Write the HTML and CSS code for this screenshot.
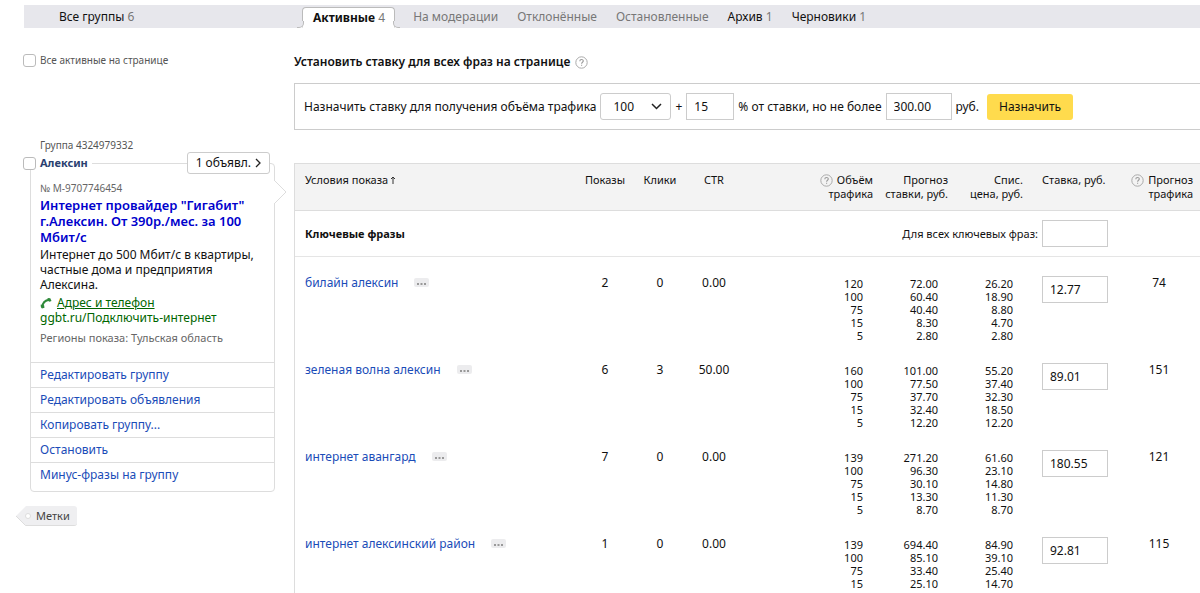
FILE: index.html
```html
<!DOCTYPE html>
<html lang="ru">
<head>
<meta charset="utf-8">
<title>Группы объявлений</title>
<link rel="stylesheet" href="styles.css">
</head>
<body>
<svg class="defs" width="0" height="0" aria-hidden="true">
  <symbol id="help" viewBox="0 0 13 13"><circle cx="6.5" cy="6.5" r="5.7" fill="none" stroke="#aaa" stroke-width="1"/><path d="M4.800 5.200c0-2.200 3.500-2.200 3.500-.2 0 1.200-1.700 1.300-1.700 2.700M6.600 8.700v1.100" fill="none" stroke="#999" stroke-width="1.100"/></symbol>
  <symbol id="dots" viewBox="0 0 15 9"><path d="M3 5h2v2H3zM6.500 5h2v2h-2zM10 5h2v2h-2z" fill="#999"/></symbol>
</svg>
<nav class="tabs">
  <a class="tab tab-all" href="#">Все группы <span class="count">6</span></a>
  <div class="tab-list">
    <a class="tab tab-active" href="#"><b>Активные</b> <span class="count">4</span></a>
    <a class="tab tab-muted" href="#">На модерации</a>
    <a class="tab tab-muted" href="#">Отклонённые</a>
    <a class="tab tab-muted" href="#">Остановленные</a>
    <a class="tab" href="#">Архив <span class="count">1</span></a>
    <a class="tab" href="#">Черновики <span class="count">1</span></a>
  </div>
</nav>
<div class="layout">
  <aside class="side">
    <label class="check-all"><input type="checkbox" class="check"> Все активные на странице</label>
    <p class="group-id">Группа 4324979332</p>
    <section class="group">
      <header class="group-head">
        <input type="checkbox" class="check" id="g1">
        <label for="g1" class="group-name">Алексин</label>
        <button class="ads-count" type="button">1 объявл. <svg width="6" height="10" viewBox="0 0 6 10"><path d="M1 1l4 4-4 4" fill="none" stroke="#222" stroke-width="1.300"/></svg></button>
      </header>
      <svg class="pointer" width="13" height="24" viewBox="0 0 13 24"><path d="M0 0l12 12L0 24" fill="#fff" stroke="#ddd"/></svg>
      <div class="card">
        <div class="ad">
          <p class="note number">№ M-9707746454</p>
          <a class="ad-title" href="#">Интернет провайдер "Гигабит" г.Алексин. От 390р./мес. за 100 Мбит/с</a>
          <p class="ad-text">Интернет до 500 Мбит/с в квартиры, частные дома и предприятия Алексина.</p>
          <p class="ad-contact"><svg width="13" height="12" viewBox="0 0 13 12"><path d="M2.500 10C2.500 6 5 3.200 9.500 2.700" fill="none" stroke="#2f8a3a" stroke-width="2"/><path d="M.8 7.500l3.300.8.400 2.500-2.500.8C.8 10.500.5 9 .8 7.500zM7.600 1l2.700.3 1.200 2.700-2 .8L7.600 3.500z" fill="#2f8a3a"/></svg><a href="#">Адрес и телефон</a></p>
          <p class="ad-url">ggbt.ru/Подключить-интернет</p>
          <p class="note regions">Регионы показа: Тульская область</p>
        </div>
        <a class="action" href="#">Редактировать группу</a>
        <a class="action" href="#">Редактировать объявления</a>
        <a class="action" href="#">Копировать группу...</a>
        <a class="action" href="#">Остановить</a>
        <a class="action action-last" href="#">Минус-фразы на группу</a>
      </div>
    </section>
    <button class="tag" type="button"><svg width="15" height="20" viewBox="0 0 15 20"><path d="M15 0H10L0 10l10 10h5z" fill="#efeff1"/><path d="M0 10l9.500 9.500H15" fill="none" stroke="#ddd"/><circle cx="12" cy="10" r="2.500" fill="#fff" stroke="#ddd"/></svg><span class="tag-text">Метки</span></button>
  </aside>
  <main class="main">
    <h2 class="title">Установить ставку для всех фраз на странице <svg width="13" height="13"><use href="#help"/></svg></h2>
    <form class="bid-form">
      <label for="volume">Назначить ставку для получения объёма трафика</label>
      <span class="select-wrap"><select id="volume" class="volume"><option>100</option></select><svg class="chevron" width="11" height="7" viewBox="0 0 11 7"><path d="M1 1l4.500 4.500L10 1" fill="none" stroke="#222" stroke-width="1.500"/></svg></span>
      <label for="percent">+</label>
      <input id="percent" class="field percent" value="15">
      <label for="limit">% от ставки, но не более</label>
      <input id="limit" class="field" value="300.00">
      <span>руб.</span>
      <button class="apply" type="button">Назначить</button>
    </form>
    <div class="phrases-box">
    <table class="phrases">
      <colgroup><col><col class="c-shows"><col class="c-clicks"><col class="c-ctr"><col class="c-volume"><col class="c-price"><col class="c-price"><col class="c-bid"><col class="c-traffic"></colgroup>
      <thead>
        <tr><th class="left">Условия показа<svg class="sort" width="6" height="8" viewBox="0 0 6 8"><path d="M3 8V1M1 3l2-2 2 2" fill="none" stroke="#333"/></svg></th><th>Показы</th><th>Клики</th><th>CTR</th><th class="right"><svg class="help" width="13" height="13"><use href="#help"/></svg>Объём<br>трафика</th><th class="right">Прогноз<br>ставки, руб.</th><th class="right">Спис.<br>цена, руб.</th><th class="bid">Ставка, руб.</th><th class="right last"><svg class="help" width="13" height="13"><use href="#help"/></svg>Прогноз<br>трафика</th></tr>
      </thead>
      <tbody>
        <tr class="section"><td colspan="4"><b>Ключевые фразы</b></td><td colspan="4"><div class="all-bids"><label for="all">Для всех ключевых фраз:</label><input id="all" class="field"></div></td><td></td></tr>
        <tr class="row"><td><a href="#">билайн алексин</a><button class="more" type="button" aria-label="Ещё"><svg width="15" height="9"><use href="#dots"/></svg></button></td><td class="num">2</td><td class="num">0</td><td class="num">0.00</td><td class="list">120<br>100<br>75<br>15<br>5</td><td class="list">72.00<br>60.40<br>40.40<br>8.30<br>2.80</td><td class="list">26.20<br>18.90<br>8.80<br>4.70<br>2.80</td><td class="bid"><input class="field" aria-label="Ставка" value="12.77"></td><td class="num">74</td></tr>
        <tr class="row"><td><a href="#">зеленая волна алексин</a><button class="more" type="button" aria-label="Ещё"><svg width="15" height="9"><use href="#dots"/></svg></button></td><td class="num">6</td><td class="num">3</td><td class="num">50.00</td><td class="list">160<br>100<br>75<br>15<br>5</td><td class="list">101.00<br>77.50<br>37.70<br>32.40<br>12.20</td><td class="list">55.20<br>37.40<br>32.30<br>18.50<br>12.20</td><td class="bid"><input class="field" aria-label="Ставка" value="89.01"></td><td class="num">151</td></tr>
        <tr class="row"><td><a href="#">интернет авангард</a><button class="more" type="button" aria-label="Ещё"><svg width="15" height="9"><use href="#dots"/></svg></button></td><td class="num">7</td><td class="num">0</td><td class="num">0.00</td><td class="list">139<br>100<br>75<br>15<br>5</td><td class="list">271.20<br>96.30<br>30.10<br>13.30<br>8.70</td><td class="list">61.60<br>23.10<br>14.80<br>11.30<br>8.70</td><td class="bid"><input class="field" aria-label="Ставка" value="180.55"></td><td class="num">121</td></tr>
        <tr class="row"><td><a href="#">интернет алексинский район</a><button class="more" type="button" aria-label="Ещё"><svg width="15" height="9"><use href="#dots"/></svg></button></td><td class="num">1</td><td class="num">0</td><td class="num">0.00</td><td class="list">139<br>100<br>75<br>15</td><td class="list">694.40<br>85.10<br>33.40<br>25.10</td><td class="list">84.90<br>39.10<br>25.40<br>14.70</td><td class="bid"><input class="field" aria-label="Ставка" value="92.81"></td><td class="num">115</td></tr>
      </tbody>
    </table>
    </div>
  </main>
</div>
</body>
</html>
```
FILE: styles.css
```css
* { box-sizing: border-box; }
body { margin: 0; padding: 5px 0 0 24px; font: 12px/14px "Noto Sans", "Open Sans", sans-serif; color: #111; background: #fff; }
p, h2 { margin: 0; }
a { color: #1a4cb8; text-decoration: none; }
svg { flex: none; }
button, input, select { font: inherit; color: inherit; margin: 0; }
.defs { position: absolute; }

.tabs { display: flex; height: 23px; background: #e7e7ec; }
.tab { color: #111; line-height: 23px; white-space: nowrap; }
.tab-all { flex: 0 0 278px; padding-left: 35px; }
.tab-list { display: flex; gap: 19px; }
.count { color: #777; }
.tab-muted { color: #777; }
.tab-active { position: relative; height: 21px; margin: 2px -1px 0 0; padding: 0 9px 0 10px; line-height: 19px; background: #fff; border: 1px solid #bbb; border-bottom: 0; border-radius: 4px 4px 0 0; }
.tab-active::before, .tab-active::after { content: ""; position: absolute; bottom: 0; width: 6px; height: 6px; background: #e7e7ec; border: 0 solid #bbb; border-bottom-width: 1px; }
.tab-active::before { left: -6px; border-right-width: 1px; border-radius: 0 0 5px 0; box-shadow: 2px 0 0 #fff; }
.tab-active::after { right: -6px; border-left-width: 1px; border-radius: 0 0 0 5px; box-shadow: -2px 0 0 #fff; }

.layout { display: flex; gap: 19px; min-height: calc(100vh - 28px); }
.side { flex: 0 0 252px; margin-left: -1px; padding-top: 25px; }
.main { flex: 1; min-width: 0; display: flex; flex-direction: column; }

.check { appearance: none; flex: none; width: 13px; height: 13px; background: #fff; border: 1px solid #bbb; border-radius: 3px; }
.check-all { display: flex; gap: 4px; align-items: center; font-size: 10px; color: #555; }
.group-id { margin: 71px 0 0 17px; font-size: 10px; color: #555; }
.group { position: relative; }
.group-head { position: relative; z-index: 1; display: flex; align-items: center; height: 22px; padding-right: 5px; }
.group-name { padding: 0 4px; font-weight: bold; font-size: 11px; color: #2a3f70; background: #fff; }
.ads-count { display: flex; align-items: center; gap: 4px; height: 22px; margin-left: auto; padding: 0 8px; background: #fff; border: 1px solid #ccc; border-radius: 3px; }
.pointer { position: absolute; right: -12px; top: 28px; z-index: 1; }
.card { margin: -11px 0 0 7px; border: 1px solid #ddd; border-radius: 4px; }
.ad { padding: 17px 9px 16px; height: 198px; }
.note { font-size: 11px; color: #666; }
.number { font-size: 10px; }
.ad-title { display: block; margin-top: 2px; font-size: 13px; line-height: 16px; font-weight: 600; color: #0000cc; }
.ad-text { margin-top: 2px; line-height: 15px; }
.ad-contact { display: flex; align-items: center; gap: 4px; margin-top: 3px; line-height: 15px; }
.ad-contact a { color: #006600; text-decoration: underline; }
.ad-url { line-height: 15px; color: #006600; }
.regions { margin-top: 6px; }
.action { display: block; height: 25px; padding-left: 9px; line-height: 24px; border-top: 1px solid #ddd; }
.action-last { height: 29px; }
.tag { display: flex; margin: 14px 0 0 -7px; padding: 0; border: 0; background: none; color: #444; font-size: 11px; }
.tag-text { padding: 0 7px 0 5px; line-height: 19px; background: #efeff1; border-bottom: 1px solid #ddd; border-radius: 0 3px 3px 0; }

.title { display: flex; gap: 5px; align-items: center; margin: 27px 0 14px; font-size: 12px; line-height: 14px; font-weight: 600; }
.bid-form { display: flex; align-items: center; gap: 4px; height: 47px; padding-left: 9px; border: 1px solid #ccc; border-right: 0; white-space: nowrap; }
.field { width: 66px; height: 27px; padding: 0 7px 1px; background: #fff; border: 1px solid #ccc; }
.percent { width: 48px; }
.select-wrap { position: relative; display: flex; }
.volume { appearance: none; width: 71px; height: 27px; padding: 0 12px; background: #fff; border: 1px solid #ccc; border-radius: 3px; }
.chevron { position: absolute; right: 9px; top: 10px; pointer-events: none; }
.apply { height: 26px; margin-left: 4px; padding: 0 12px; background: #ffdb4d; border: 0; border-radius: 3px; }

.phrases-box { flex: 1; margin-top: 33px; border-left: 1px solid #ddd; }
.phrases { width: 100%; table-layout: fixed; border-collapse: separate; border-spacing: 0; }
.c-shows { width: 60px; }
.c-clicks { width: 50px; }
.c-ctr { width: 58px; }
.c-volume { width: 135px; }
.c-price { width: 75px; }
.c-bid { width: 90px; }
.c-traffic { width: 82px; }
th { height: 48px; padding: 9px 0 0; font-size: 11px; font-weight: normal; vertical-align: top; white-space: nowrap; background: #f3f3f3; border: 1px solid #ddd; border-width: 1px 0; }
td { padding: 0; vertical-align: top; white-space: nowrap; }
.left { text-align: left; padding-left: 10px; }
.right { text-align: right; padding-right: 5px; }
.last { padding-right: 7px; }
.bid { text-align: left; padding-left: 14px; }
.sort { margin-left: 2px; }
.help { margin-right: 4px; vertical-align: -3px; }
.section td { height: 46px; font-size: 11px; vertical-align: middle; border-bottom: 1px solid #e5e5e5; }
.section td:first-child, .row td:first-child { padding-left: 10px; }
.all-bids { display: flex; justify-content: flex-end; align-items: center; gap: 4px; padding-right: 10px; }
.row td { height: 87px; padding-top: 19px; line-height: 14px; }
.row .list { padding: 20px 15px 0 0; text-align: right; font-size: 11px; line-height: 13px; }
.row:last-child td { height: 73px; }
.num { text-align: center; }
.more { margin-left: 16px; padding: 0; height: 9px; border: 0; border-radius: 2px; background: #ececee; line-height: 0; }
```
